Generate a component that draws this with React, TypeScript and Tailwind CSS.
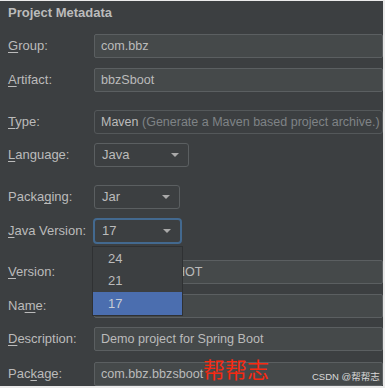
import React from 'react';

type RowProps = {
  label: string;
  mn: number;
  className: string;
  children: React.ReactNode;
};

// label with the mnemonic letter underlined
const Label: React.FC<{ text: string; mn: number }> = ({ text, mn }) => (
  <span className="whitespace-nowrap">
    {text.slice(0, mn)}
    <u className="underline underline-offset-2">{text.charAt(mn)}</u>
    {text.slice(mn + 1)}
  </span>
);

const Row: React.FC<RowProps> = ({ label, mn, className, children }) => (
  <div className={`flex items-center ${className}`}>
    <div className="w-[94px] shrink-0 pl-[8px]">
      <Label text={label} mn={mn} />
    </div>
    {children}
  </div>
);

const Field: React.FC<{ value: string }> = ({ value }) => (
  <div className="h-full flex-1 flex items-center bg-[#45494a] border border-[#5b5f61] rounded-[2px] px-[6px] text-[12.6px] whitespace-nowrap overflow-hidden">
    {value}
  </div>
);

const Arrow = () => (
  <svg width="8" height="4" viewBox="0 0 8 4" className="shrink-0">
    <path d="M0 0 L8 0 L4 4 Z" fill="#a9a9a9" />
  </svg>
);

const App: React.FC = () => {
  return (
    <div className="relative w-[385px] h-[388px] overflow-hidden bg-[#3c3f41] border-t border-r-2 border-b-2 border-[#ebebeb] text-[13px] text-[#bbbbbb] font-['Liberation_Sans',Arial,sans-serif]">
      <div className="h-[23px] flex items-center pl-[8px] font-bold">Project Metadata</div>

      <Row label="Group:" mn={0} className="h-[24px] mt-[10px]">
        <Field value="com.bbz" />
      </Row>
      <Row label="Artifact:" mn={0} className="h-[24px] mt-[10px]">
        <Field value="bbzSboot" />
      </Row>
      <Row label="Type:" mn={0} className="h-[24px] mt-[18px]">
        <div className="h-full flex-1 flex items-center border border-[#54585a] rounded-[3px] pl-[6px] text-[12.5px] whitespace-nowrap overflow-hidden">
          Maven&nbsp;<span className="text-[#7f8386]">(Generate a Maven based project archive.)</span>
        </div>
      </Row>
      <Row label="Language:" mn={0} className="h-[24px] mt-[9px]">
        <div className="h-full w-[95px] flex items-center justify-between border border-[#5b5f61] rounded-[3px] pl-[7px] pr-[9px]">
          <span>Java</span>
          <Arrow />
        </div>
      </Row>
      <Row label="Packaging:" mn={5} className="h-[24px] mt-[18px]">
        <div className="h-full w-[86px] flex items-center justify-between border border-[#5b5f61] rounded-[3px] pl-[7px] pr-[9px]">
          <span>Jar</span>
          <Arrow />
        </div>
      </Row>
      <Row label="Java Version:" mn={0} className="h-[26px] mt-[9px]">
        <div className="h-full w-[89px] -ml-[1px] flex items-center justify-between border-2 border-[#43698f] rounded-[4px] pl-[7px] pr-[9px]">
          <span>17</span>
          <Arrow />
        </div>
      </Row>
      <Row label="Version:" mn={0} className="h-[24px] mt-[16px]">
        <Field value="0.0.1-SNAPSHOT" />
      </Row>
      <Row label="Name:" mn={2} className="h-[24px] mt-[10px]">
        <Field value="bbzSboot" />
      </Row>
      <Row label="Description:" mn={0} className="h-[24px] mt-[9px]">
        <Field value="Demo project for Spring Boot" />
      </Row>
      <Row label="Package:" mn={3} className="h-[24px] mt-[11px]">
        <Field value="com.bbz.bbzsboot" />
      </Row>

      {/* open Java Version dropdown */}
      <div className="absolute left-[92px] top-[245px] w-[91px] h-[70px] bg-[#3c3f41] border border-[#2f3133] pt-[1px] flex flex-col">
        <div className="h-[22px] flex items-center pl-[15px]">24</div>
        <div className="h-[22px] flex items-center pl-[15px]">21</div>
        <div className="h-[23px] flex items-center pl-[15px] bg-[#4b6eaf] text-[#c8ccd4]">17</div>
      </div>

      {/* watermarks */}
      <div className="absolute left-[203px] top-[353px] text-[22px] leading-[28px] text-[#f52a12] font-['Noto_Sans_CJK_SC',sans-serif]">帮帮志</div>
      <div className="absolute left-[312px] top-[369px] whitespace-nowrap text-[9.5px] leading-[13px] text-[#d9d9d9] font-['Liberation_Sans','Noto_Sans_CJK_SC',sans-serif]">CSDN @帮帮志</div>
    </div>
  );
};

export default App;
